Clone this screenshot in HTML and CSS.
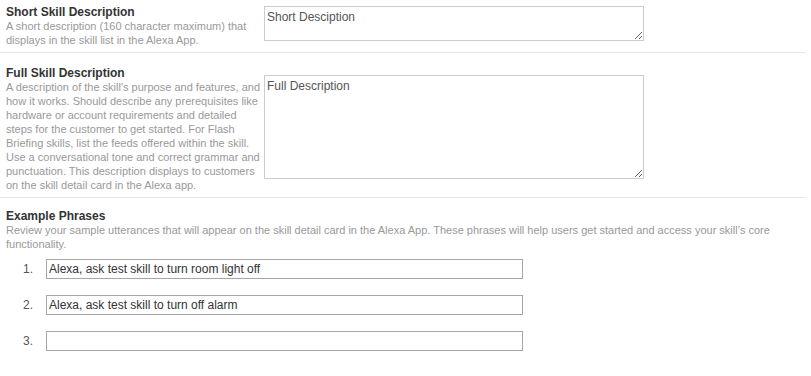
FILE: index.html
```
<!DOCTYPE html>
<html lang="en">
<head>
  <meta charset="UTF-8">
  <title>Skill Information</title>
  <link rel="stylesheet" href="styles.css">
</head>
<body>

  <div class="form">

    <div class="section">
      <div class="label">
        <h3>Short Skill Description</h3>
        <p>A short description (160 character maximum) that displays in the skill list in the Alexa App.</p>
      </div>
      <textarea class="short">Short Desciption</textarea>
    </div>

    <div class="section">
      <div class="label">
        <h3>Full Skill Description</h3>
        <p>A description of the skill's purpose and features, and how it works. Should describe any prerequisites like hardware or account requirements and detailed steps for the customer to get started. For Flash Briefing skills, list the feeds offered within the skill. Use a conversational tone and correct grammar and punctuation. This description displays to customers on the skill detail card in the Alexa app.</p>
      </div>
      <textarea class="full">Full Description</textarea>
    </div>

    <div class="section phrases">
      <div class="label wide">
        <h3>Example Phrases</h3>
        <p>Review your sample utterances that will appear on the skill detail card in the Alexa App. These phrases will help users get started and access your skill’s core functionality.</p>
      </div>

      <div class="phrase-list">
        <div class="phrase">
          <span class="num">1.</span>
          <input type="text" value="Alexa, ask test skill to turn room light off">
        </div>
        <div class="phrase">
          <span class="num">2.</span>
          <input type="text" value="Alexa, ask test skill to turn off alarm">
        </div>
        <div class="phrase">
          <span class="num">3.</span>
          <input type="text" value="">
        </div>
      </div>
    </div>

  </div>

</body>
</html>
```

FILE: styles.css
```
body {
  margin: 0;
  font-family: "Liberation Sans", Arial, sans-serif;
  background-color: #fff;
  color: #333;
}

.form {
  width: 806px;
}

.section {
  display: flex;
  align-items: center;
  gap: 2px;
  padding: 13px 0 5px;
  border-bottom: 1px solid #e6e6e6;
}

.section:first-child {
  padding-top: 5px;
}

.label {
  width: 256px;
  padding-left: 6px;
}

.label h3 {
  margin: 0;
  font-size: 12px;
  line-height: 14px;
  font-weight: bold;
  color: #333;
}

.label p {
  margin: 0;
  font-size: 11px;
  line-height: 14px;
  color: #999;
}

textarea {
  width: 380px;
  box-sizing: border-box;
  margin: 0 0 5px 0;
  padding: 3px 2px 2px 2px;
  border: 1px solid #ccc;
  font-family: "Liberation Sans", Arial, sans-serif;
  font-size: 12px;
  color: #555;
}

textarea.short {
  height: 35px;
}

textarea.full {
  height: 104px;
}

/* example phrases */
.phrases {
  display: block;
  padding-top: 11px;
  border-bottom: none;
}

.label.wide {
  width: 794px;
}

.phrase-list {
  display: flex;
  flex-direction: column;
  gap: 16px;
  padding: 8px 0 0 17px;
}

.phrase {
  display: flex;
  align-items: center;
}

.num {
  width: 29px;
  padding-left: 6px;
  box-sizing: border-box;
  font-size: 12px;
  color: #555;
}

.phrase input {
  width: 477px;
  height: 20px;
  box-sizing: border-box;
  margin: 0;
  padding: 1px 2px;
  border: 1px solid #a6a6a6;
  font-family: "Liberation Sans", Arial, sans-serif;
  font-size: 12px;
  color: #333;
}
```
